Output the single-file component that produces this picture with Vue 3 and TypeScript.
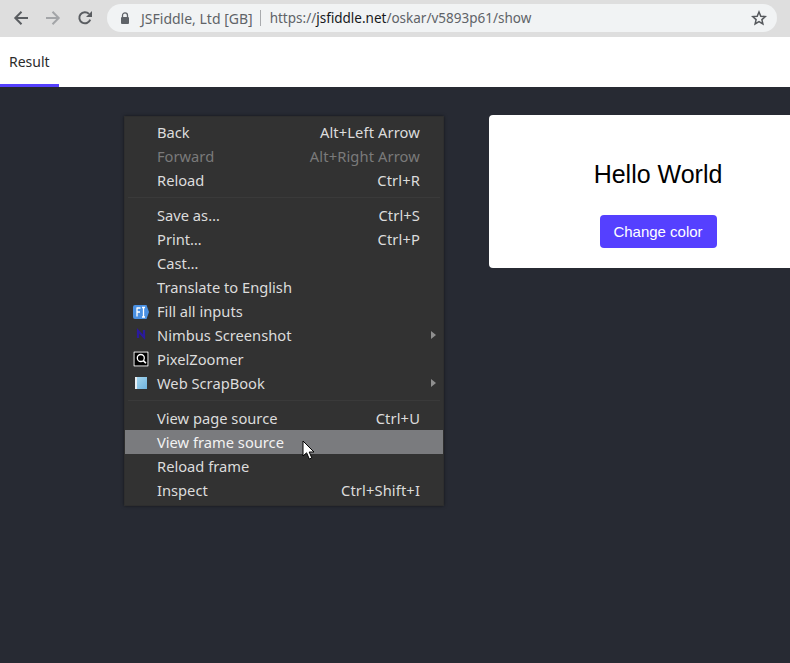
<script setup lang="ts">
interface Item { label: string; shortcut?: string; disabled?: boolean; hover?: boolean; icon?: string; sub?: boolean }
const groups: Item[][] = [
  [
    { label: 'Back', shortcut: 'Alt+Left Arrow' },
    { label: 'Forward', shortcut: 'Alt+Right Arrow', disabled: true },
    { label: 'Reload', shortcut: 'Ctrl+R' },
  ],
  [
    { label: 'Save as…', shortcut: 'Ctrl+S' },
    { label: 'Print…', shortcut: 'Ctrl+P' },
    { label: 'Cast…' },
    { label: 'Translate to English' },
    { label: 'Fill all inputs', icon: 'fill' },
    { label: 'Nimbus Screenshot', icon: 'nimbus', sub: true },
    { label: 'PixelZoomer', icon: 'zoom' },
    { label: 'Web ScrapBook', icon: 'book', sub: true },
  ],
  [
    { label: 'View page source', shortcut: 'Ctrl+U' },
    { label: 'View frame source', hover: true },
    { label: 'Reload frame' },
    { label: 'Inspect', shortcut: 'Ctrl+Shift+I' },
  ],
]
</script>

<template>
  <div class="page">
    <header class="toolbar">
      <button class="nav" aria-label="Back">
        <svg width="16" height="16" viewBox="0 0 16 16"><path d="M15 8H2.500M8.500 1.800 2.300 8l6.200 6.200" fill="none" stroke="#5a5d61" stroke-width="2"/></svg>
      </button>
      <button class="nav" aria-label="Forward">
        <svg width="16" height="16" viewBox="0 0 16 16"><path d="M1 8h12.500M7.500 1.800 13.700 8l-6.200 6.200" fill="none" stroke="#a3a5a8" stroke-width="2"/></svg>
      </button>
      <button class="nav" aria-label="Reload">
        <svg width="16" height="16" viewBox="0 0 16 16"><path d="M13.200 9.600A5.600 5.600 0 1 1 12 3.900" fill="none" stroke="#5a5d61" stroke-width="2"/><path d="M15 1v6H9z" fill="#5a5d61"/></svg>
      </button>
      <div class="omnibox">
        <svg class="lock" width="10" height="12" viewBox="0 0 10 12"><path d="M2.500 5V3.400a2.500 2.500 0 0 1 5 0V5" fill="none" stroke="#5f6368" stroke-width="1.300"/><rect x="1" y="5" width="8" height="7" rx="1" fill="#5f6368"/></svg>
        <span class="org">JSFiddle, Ltd [GB]</span>
        <span class="divider"></span>
        <span class="url">https://<b>jsfiddle.net</b>/oskar/v5893p61/show</span>
        <svg class="star" width="16" height="16" viewBox="0 0 16 16"><path d="m8 2 1.800 4.200 4.500.4-3.400 3 1 4.400L8 11.700 4.100 14l1-4.400-3.400-3 4.500-.4z" fill="none" stroke="#55585c" stroke-width="1.500"/></svg>
      </div>
    </header>

    <nav class="tabs"><div class="tab">Result</div></nav>

    <main class="stage">
      <section class="menu">
        <template v-for="(group, g) in groups" :key="g">
          <div v-if="g > 0" class="sep"></div>
          <div v-for="item in group" :key="item.label" class="row" :class="{ disabled: item.disabled, hover: item.hover }">
            <span class="icon">
              <svg v-if="item.icon === 'fill'" width="16" height="16" viewBox="0 0 16 16"><path d="M2 2h11.500L16 9l-2.500 7H2a2 2 0 0 1-2-2V4a2 2 0 0 1 2-2z" fill="#4a90e2"/><path d="M3.500 5h4M4 5v8.500M4 9h3M10.500 4.500v9.500M9 4.500h3M9 14h3" fill="none" stroke="#fff" stroke-width="1.300"/></svg>
              <svg v-else-if="item.icon === 'nimbus'" width="16" height="16" viewBox="0 0 16 16"><path d="M5 11V3.800l6 6.400V3" fill="none" stroke="#2a1a9c" stroke-width="2.200"/></svg>
              <svg v-else-if="item.icon === 'zoom'" width="16" height="16" viewBox="0 0 16 16"><rect width="16" height="16" fill="#000"/><rect x="1" y="1" width="14" height="14" fill="none" stroke="#fff"/><circle cx="7.800" cy="7" r="3.500" fill="none" stroke="#fff" stroke-width="1.300"/><path d="m10.400 9.600 2.500 2.600" stroke="#fff" stroke-width="1.600"/></svg>
              <svg v-else-if="item.icon === 'book'" width="16" height="16" viewBox="0 0 16 16"><defs><linearGradient id="bookFill" x1="0" y1="0" x2="1" y2="1"><stop offset="0" stop-color="#a8d8ee"/><stop offset="1" stop-color="#6fb4e0"/></linearGradient></defs><rect x="2" y="2" width="12" height="12" fill="url(#bookFill)"/><rect x="2" y="2" width="2" height="12" fill="#e8eef2"/></svg>
            </span>
            <span class="label">{{ item.label }}</span>
            <span v-if="item.shortcut" class="shortcut">{{ item.shortcut }}</span>
            <span v-if="item.sub" class="arrow"></span>
          </div>
        </template>
        <svg class="cursor" width="14" height="21" viewBox="0 0 14 21"><path d="M1 1v15l3.600-3.200L7.300 19l2.500-1.100-2.600-5.900H12z" fill="#fff" stroke="#000"/></svg>
      </section>

      <section class="card">
        <h1>Hello World</h1>
        <button class="cta">Change color</button>
      </section>
    </main>
  </div>
</template>

<style>
html, body { margin: 0; background: #272a33; }
</style>

<style scoped>
.page { width: 790px; height: 663px; overflow: hidden; display: flex; flex-direction: column; background: #272a33; font-family: "Noto Sans", sans-serif; }
.toolbar { height: 37px; box-sizing: border-box; background: #dedede; display: flex; align-items: flex-start; padding: 4px 13px 0 5px; }
.nav { width: 32px; height: 28px; padding: 0; border: 0; background: none; display: flex; align-items: center; justify-content: center; }
.omnibox { margin-left: 6px; flex: 1; height: 28px; border-radius: 14px; background: #f1f3f4; display: flex; align-items: center; padding: 0 10px 0 13px; font-size: 13.500px; color: #5f6368; white-space: nowrap; }
.lock { margin-right: 11px; }
.org { font-size: 14px; }
.divider { width: 1px; height: 16px; background: #a9abae; margin: 0 9px 0 7px; }
.url b { font-weight: 400; color: #16181b; }
.star { margin-left: auto; }
.tabs { height: 50px; background: #fff; display: flex; }
.tab { width: 59px; height: 50px; box-sizing: border-box; border-bottom: 3px solid #5540ff; padding: 15px 0 0 9px; font-size: 14px; line-height: 20px; color: #2b2b2b; }
.stage { flex: 1; display: flex; align-items: flex-start; padding-top: 28px; padding-left: 124px; }
.menu { position: relative; width: 320px; flex: none; margin-top: 1px; box-sizing: border-box; padding: 3px 0; border: 1px solid #2e2e2e; background: #323232; box-shadow: 0 0 3px rgba(0,0,0,.5); color: #dcdcdc; font-size: 14.700px; }
.row { height: 24px; display: flex; align-items: center; padding: 0 23px 0 8px; position: relative; white-space: nowrap; }
.row.disabled { color: #7a7a7a; }
.row.hover { background: #7a7b7e; color: #f2f2f2; }
.icon { width: 16px; height: 16px; margin-right: 8px; display: flex; }
.label { flex: 1; }
.shortcut { letter-spacing: .12px; }
.arrow { position: absolute; right: 7px; top: 8px; border-left: 5px solid #8f8f8f; border-top: 4px solid transparent; border-bottom: 4px solid transparent; }
.sep { height: 1px; margin: 5px 3px; background: #3a3a3a; }
.cursor { position: absolute; left: 177px; top: 323px; }
.card { width: 338px; height: 153px; flex: none; margin-left: 45px; box-sizing: border-box; background: #fff; border-radius: 4px; display: flex; flex-direction: column; align-items: center; font-family: "Liberation Sans", sans-serif; }
h1 { margin: 44px 0 0; font-size: 25px; line-height: 30px; font-weight: 400; color: #000; }
.cta { margin-top: 26px; width: 117px; height: 33px; border: 0; border-radius: 4px; background: #5540ff; color: #fff; font: 15px "Liberation Sans", sans-serif; }
</style>
